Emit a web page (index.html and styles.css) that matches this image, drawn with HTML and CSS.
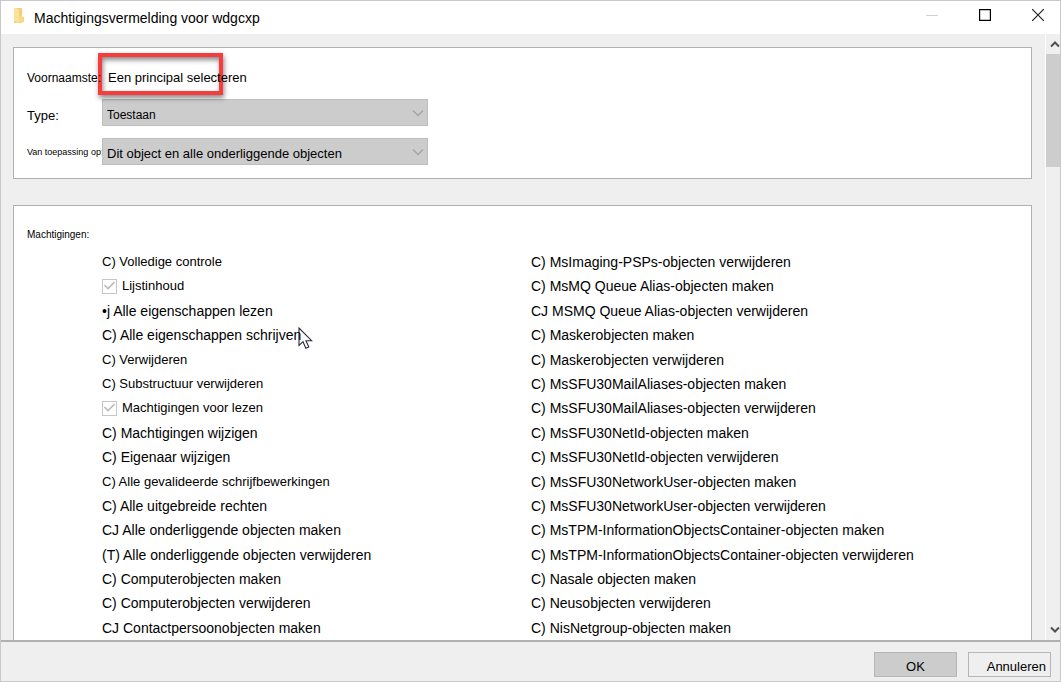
FILE: index.html
```html
<!DOCTYPE html>
<html lang="nl">
<head>
<meta charset="utf-8">
<title>Machtigingsvermelding voor wdgcxp</title>
<link rel="stylesheet" href="styles.css">
</head>
<body>
<div class="window">
  <header class="titlebar">
    <svg class="folder" width="12" height="16" viewBox="0 0 12 16" aria-hidden="true">
      <path d="M2 0h8v9h2v5l-4 1H2z" fill="#f3d078"/>
      <path d="M2 0h2l3 2v13l-5-2z" fill="#fbe29a"/>
      <path d="M7 8h2l3 1v5H7z" fill="#f7d985"/>
    </svg>
    <h1 class="title">Machtigingsvermelding voor wdgcxp</h1>
    <div class="controls">
      <button class="control" type="button" aria-label="Minimaliseren" disabled>
        <svg width="12" height="12" viewBox="0 0 12 12"><path d="M0 6.5h12" stroke="#d2d2d2"/></svg>
      </button>
      <button class="control" type="button" aria-label="Maximaliseren">
        <svg width="12" height="12" viewBox="0 0 12 12"><path d="M.6.6h10.8v10.8H.6z" fill="none" stroke="#000" stroke-width="1.2"/></svg>
      </button>
      <button class="control" type="button" aria-label="Sluiten">
        <svg width="12" height="12" viewBox="0 0 12 12"><path d="M0 0l12 12M12 0L0 12" stroke="#222" stroke-width="1.2"/></svg>
      </button>
    </div>
  </header>

  <div class="body">
    <main class="content">
      <section class="panel principal">
        <div class="field">
          <span class="highlight"></span>
          <span class="label label-medium">Voornaamste:</span>
          <a class="select-principal" href="#">Een principal selecteren</a>
        </div>
        <div class="field">
          <label class="label" for="type">Type:</label>
          <div class="dropdown">
            <select class="select select-medium" id="type" disabled><option>Toestaan</option></select>
            <svg class="chevron" width="12" height="8" viewBox="0 0 12 8"><path d="M1 1.5l5 5 5-5" fill="none" stroke="#a3a3a3" stroke-width="1.3"/></svg>
          </div>
        </div>
        <div class="field">
          <label class="label label-tiny" for="scope">Van toepassing op:</label>
          <div class="dropdown">
            <select class="select" id="scope" disabled><option>Dit object en alle onderliggende objecten</option></select>
            <svg class="chevron" width="12" height="8" viewBox="0 0 12 8"><path d="M1 1.5l5 5 5-5" fill="none" stroke="#a3a3a3" stroke-width="1.3"/></svg>
          </div>
        </div>
      </section>

      <section class="panel permissions">
        <h2 class="heading">Machtigingen:</h2>
        <div class="columns">
          <ul class="list">
            <li class="compact">C) Volledige controle</li>
            <li class="compact"><label class="check"><input class="box" type="checkbox" checked disabled><svg class="tick" width="11" height="9" viewBox="0 0 11 9"><path d="M.5 4L4 7.500 10.500 1" fill="none" stroke="#bcbcbc" stroke-width="1.600"/></svg>Lijstinhoud</label></li>
            <li>•j Alle eigenschappen lezen</li>
            <li>C) Alle eigenschappen schrijven<svg class="pointer" width="15" height="23" viewBox="0 0 15 23" aria-hidden="true"><path d="M1 1v17.500l4-3.800 2.800 6.500 3-1.300-2.800-6.200h5.600z" fill="#fff" stroke="#2b2b35" stroke-width="1.100"/></svg></li>
            <li class="compact">C) Verwijderen</li>
            <li class="compact">C) Substructuur verwijderen</li>
            <li class="compact"><label class="check"><input class="box" type="checkbox" checked disabled><svg class="tick" width="11" height="9" viewBox="0 0 11 9"><path d="M.5 4L4 7.500 10.500 1" fill="none" stroke="#bcbcbc" stroke-width="1.600"/></svg>Machtigingen voor lezen</label></li>
            <li>C) Machtigingen wijzigen</li>
            <li>C) Eigenaar wijzigen</li>
            <li class="compact">C) Alle gevalideerde schrijfbewerkingen</li>
            <li>C) Alle uitgebreide rechten</li>
            <li>CJ Alle onderliggende objecten maken</li>
            <li>(T) Alle onderliggende objecten verwijderen</li>
            <li>C) Computerobjecten maken</li>
            <li>C) Computerobjecten verwijderen</li>
            <li>CJ Contactpersoonobjecten maken</li>
          </ul>
          <ul class="list">
            <li>C) MsImaging-PSPs-objecten verwijderen</li>
            <li>C) MsMQ Queue Alias-objecten maken</li>
            <li>CJ MSMQ Queue Alias-objecten verwijderen</li>
            <li>C) Maskerobjecten maken</li>
            <li>C) Maskerobjecten verwijderen</li>
            <li>C) MsSFU30MailAliases-objecten maken</li>
            <li>C) MsSFU30MailAliases-objecten verwijderen</li>
            <li>C) MsSFU30NetId-objecten maken</li>
            <li>C) MsSFU30NetId-objecten verwijderen</li>
            <li>C) MsSFU30NetworkUser-objecten maken</li>
            <li>C) MsSFU30NetworkUser-objecten verwijderen</li>
            <li>C) MsTPM-InformationObjectsContainer-objecten maken</li>
            <li>C) MsTPM-InformationObjectsContainer-objecten verwijderen</li>
            <li>C) Nasale objecten maken</li>
            <li>C) Neusobjecten verwijderen</li>
            <li>C) NisNetgroup-objecten maken</li>
          </ul>
        </div>
      </section>
    </main>

    <div class="scrollbar">
      <button class="arrow" type="button" aria-label="Omhoog schuiven">
        <svg width="10" height="8" viewBox="0 0 10 8"><path d="M1 6.500l4-4 4 4" fill="none" stroke="#505050" stroke-width="2"/></svg>
      </button>
      <div class="track"><div class="thumb"></div></div>
      <button class="arrow" type="button" aria-label="Omlaag schuiven">
        <svg width="10" height="8" viewBox="0 0 10 8"><path d="M1 1.500l4 4 4-4" fill="none" stroke="#505050" stroke-width="2"/></svg>
      </button>
    </div>
  </div>

  <footer class="footer">
    <button class="button button-default" type="button">OK</button>
    <button class="button button-cancel" type="button">Annuleren</button>
  </footer>
</div>
</body>
</html>
```

FILE: styles.css
```css
* {
  box-sizing: border-box;
}

body {
  margin: 0;
  font: 14px/20px "Liberation Sans", Arial, sans-serif;
  color: #000;
}

button,
select {
  font: inherit;
  color: inherit;
}

svg {
  display: block;
}

.window {
  display: flex;
  flex-direction: column;
  height: 100vh;
  border: 1px solid #c8c8c8;
  background: #efefef;
}

.titlebar {
  display: flex;
  align-items: center;
  height: 33px;
  flex: none;
  padding-left: 11px;
  background: #fff;
}

.folder {
  margin-bottom: 4px;
}

.title {
  flex: 1;
  margin: 0 0 0 10px;
  font-size: 14px;
  font-weight: normal;
}

.controls {
  display: flex;
  height: 28px;
  align-self: flex-start;
}

.control {
  display: flex;
  align-items: center;
  justify-content: center;
  width: 53px;
  padding: 0;
  border: 0;
  background: none;
}

.control:last-child {
  width: 45px;
  margin-left: 4px;
}

.body {
  display: flex;
  flex: 1;
  min-height: 0;
}

.content {
  display: flex;
  flex: 1;
  flex-direction: column;
  gap: 26px;
  min-width: 0;
  padding: 13px 13px 0 12px;
}

.panel {
  border: 1px solid #b0b0b0;
  background: #fff;
}

.principal {
  display: flex;
  flex-direction: column;
  flex: none;
  gap: 12px;
  padding: 12px 13px 13px;
  font-size: 13px;
}

.field {
  position: relative;
  z-index: 0;
  display: flex;
  align-items: center;
  height: 27px;
}

.field:first-child {
  z-index: 1;
  padding-top: 8px;
}

.label {
  flex: none;
  width: 75px;
  padding-top: 6px;
  white-space: nowrap;
}

.label-medium {
  padding: 0;
  font-size: 12px;
}

.label-tiny {
  padding: 0;
  font-size: 9px;
}

.select-principal {
  margin-left: 6px;
  color: inherit;
  text-decoration: none;
}

.highlight {
  position: absolute;
  z-index: -1;
  top: -7px;
  left: 71px;
  width: 125px;
  height: 42px;
  border: 4px solid #f63c3c;
  box-shadow: 1px 3px 5px #0007, inset 1px 3px 5px #0007;
}

.dropdown {
  position: relative;
  width: 326px;
}

.select {
  display: block;
  width: 100%;
  height: 27px;
  padding: 4px 4px 0;
  border: 1px solid #bdbdbd;
  border-radius: 0;
  background: #ccc;
  color: #000;
  opacity: 1;
  appearance: none;
}

.select-medium {
  font-size: 12px;
}

.chevron {
  position: absolute;
  top: 10px;
  right: 4px;
}

.permissions {
  display: flex;
  flex: 1;
  flex-direction: column;
  min-height: 0;
  padding: 19px 13px 2px;
  border-bottom: 0;
}

.heading {
  margin: 0 0 7px;
  font-size: 10px;
  font-weight: normal;
}

.columns {
  display: grid;
  flex: 1;
  grid-template-columns: 429px 1fr;
  padding-left: 75px;
}

.list {
  display: flex;
  flex-direction: column;
  justify-content: space-between;
  margin: 0;
  padding: 0;
  list-style: none;
  white-space: nowrap;
}

.list li {
  position: relative;
  z-index: 0;
  height: 20px;
}

.compact {
  font-size: 13px;
}

.check {
  display: flex;
  align-items: center;
  gap: 5px;
}

.box {
  width: 15px;
  height: 15px;
  margin: 0;
  border: 1px solid #c6c6c6;
  background: #fff;
  appearance: none;
}

.tick {
  position: absolute;
  top: 5px;
  left: 2px;
}

.pointer {
  position: absolute;
  z-index: -1;
  top: 2px;
  left: 196px;
}

.scrollbar {
  display: flex;
  flex-direction: column;
  width: 15px;
  border-left: 1px solid #fff;
}

.arrow {
  display: flex;
  align-items: center;
  justify-content: flex-end;
  height: 20px;
  padding: 0;
  border: 0;
  background: none;
}

.track {
  flex: 1;
}

.thumb {
  height: 20%;
  background: #cdcdcd;
}

.footer {
  display: flex;
  flex: none;
  justify-content: flex-end;
  gap: 11px;
  padding: 10px 9px 4px;
  border-top: 2px solid #b0b0b0;
}

.button {
  width: 83px;
  height: 25px;
  padding: 4px 4px 0;
  border: 1px solid #b5b5b5;
  background: #efefef;
  font-size: 13px;
}

.button-default {
  background: #ccc;
}

.button-cancel {
  text-align: right;
}
```
